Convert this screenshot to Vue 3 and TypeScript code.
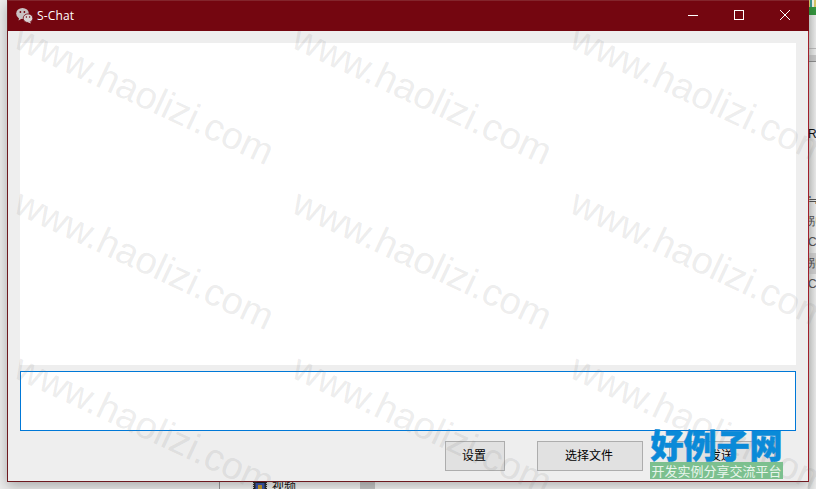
<script setup lang="ts">
const marks: number[] = Array.from({ length: 9 }, (_, i) => i)
const side: string[] = ['≒', '别', 'C', '别', 'C']
</script>

<template>
  <div class="desktop">
    <div class="behind-bottom">
      <svg class="film" width="14" height="10" viewBox="0 0 14 10">
        <rect width="14" height="10" fill="#222" />
        <path d="M.5 1V9M13.5 1V9" stroke="#ddd" stroke-dasharray="1 1" />
        <rect x="2.5" y="1" width="9" height="8" fill="#3a57b0" />
        <rect x="5" y="3" width="4" height="5" fill="#c79a2e" />
      </svg>
      <span class="film-label">视频</span>
      <div class="scrollbar"></div>
    </div>
    <div class="behind-right">
      <div class="pixels"></div>
      <div class="green"></div>
      <div class="rule-a"></div>
      <div class="rule-b"></div>
      <div class="r">R</div>
      <div v-for="(s, i) in side" :key="i" class="side-line" :class="{ hi: i === 3 }">{{ s }}</div>
    </div>

    <section class="window">
      <header class="titlebar">
        <svg class="logo" width="17" height="17" viewBox="0 0 17 17">
          <ellipse cx="6.5" cy="6.5" rx="6.3" ry="5.6" fill="#c9c2c3" />
          <path d="M3 10.5 2.6 13.4 6 11.5Z" fill="#c9c2c3" />
          <ellipse cx="12" cy="11.2" rx="4.8" ry="4.3" fill="#d9d4d5" stroke="#740610" stroke-width=".8" />
          <path d="M14 14.5 15 16.6 11.8 15.2Z" fill="#d9d4d5" />
          <circle cx="4.4" cy="5" r=".9" fill="#740610" />
          <circle cx="8.4" cy="5" r=".9" fill="#740610" />
          <circle cx="10.4" cy="10" r=".7" fill="#740610" />
          <circle cx="13.6" cy="10" r=".7" fill="#740610" />
        </svg>
        <span class="title">S-Chat</span>
        <div class="controls">
          <svg width="46" height="31" viewBox="0 0 46 31"><path d="M18 15.5H28" stroke="#fff" fill="none" /></svg>
          <svg width="46" height="31" viewBox="0 0 46 31"><rect x="18.5" y="10.5" width="9" height="9" stroke="#fff" fill="none" /></svg>
          <svg width="46" height="31" viewBox="0 0 46 31"><path d="M18 10 28 20M28 10 18 20" stroke="#fff" fill="none" /></svg>
        </div>
      </header>
      <div class="body">
        <div class="messages"></div>
        <div class="input"></div>
        <div class="actions">
          <button class="btn settings">设置</button>
          <button class="btn file">选择文件</button>
          <button class="btn send">发送</button>
        </div>
      </div>
    </section>

    <div class="watermark">
      <div class="marks">
        <span v-for="m in marks" :key="m" class="mark">www.haolizi.com</span>
      </div>
    </div>

    <div class="brand">
      <div class="brand-name">好例子网</div>
      <div class="brand-sub">开发实例分享交流平台</div>
    </div>
  </div>
</template>

<style>
html, body { margin: 0; background: #fff; }
</style>

<style scoped>
.desktop {
  position: relative;
  width: 816px;
  height: 489px;
  overflow: hidden;
  background: #ececec;
  font-family: "Noto Sans CJK SC", sans-serif;
}
.behind-bottom {
  position: absolute;
  left: 219px;
  right: 0;
  bottom: 0;
  height: 20px;
  background: #f4f4f4;
  border-left: 1px solid #999;
  padding-left: 33px;
  display: flex;
  align-items: flex-end;
  gap: 5px;
}
.film { margin-bottom: -3px; }
.film-label { font-size: 12px; line-height: 12px; margin-bottom: -3px; color: #111; }
.scrollbar {
  position: absolute;
  left: 140px;
  top: 0;
  width: 15px;
  height: 20px;
  background: #c6c6c6;
}
.behind-right {
  position: absolute;
  left: 808px;
  top: 0;
  width: 8px;
  height: 489px;
  background: linear-gradient(90deg, #d8dad8, #eeeeee);
  overflow: hidden;
  font: 12px/20px "Liberation Sans", sans-serif;
  color: #555;
}
.pixels {
  height: 7px;
  background: repeating-linear-gradient(90deg, #d8c868 0 2px, #3f9a90 2px 4px, #f2f2e8 4px 6px);
}
.green { height: 8px; background: #35973f; }
.rule-a { margin-top: 33px; height: 1px; background: #bdbdbd; }
.rule-b { margin-top: 6px; height: 6px; background: #c9c9c9; border-bottom: 1px solid #8f8f8f; }
.r { margin-top: 62px; color: #111; height: 66px; }
.side-line { height: 21px; }
.side-line.hi { background: #d0d0d0; }
.window {
  position: absolute;
  left: 7px;
  top: 0;
  width: 802px;
  height: 482px;
  box-sizing: border-box;
  border: 1px solid #6e1a20;
  border-right-color: #a01f2a;
  border-top: 0;
  background: #eeeeee;
  display: flex;
  flex-direction: column;
  box-shadow: 0 4px 12px rgba(0, 0, 0, .28);
}
.titlebar {
  height: 31px;
  flex: none;
  box-sizing: border-box;
  border-top: 1px solid #83252c;
  background: #740610;
  margin: 0 -1px 0 0;
  display: flex;
  align-items: center;
  color: #fff;
  padding-left: 8px;
}
.logo { margin-top: -2px; }
.title {
  margin: -2px 0 0 4px;
  font: 12px "Open Sans", sans-serif;
  letter-spacing: .15px;
}
.controls {
  margin-left: auto;
  margin-right: 1px;
  margin-top: -1px;
  display: flex;
}
.body {
  flex: 1;
  display: flex;
  flex-direction: column;
  padding: 12px 12px 10px 12px;
}
.messages {
  height: 322px;
  background: #fff;
}
.input {
  height: 60px;
  box-sizing: border-box;
  margin-top: 6px;
  background: #fff;
  border: 1px solid #0078d7;
}
.actions {
  margin-top: 10px;
  height: 30px;
  display: flex;
  padding-left: 425px;
}
.btn {
  height: 30px;
  box-sizing: border-box;
  border: 1px solid #adadad;
  background: #e1e1e1;
  font: 12px "Noto Sans CJK SC", sans-serif;
  color: #000;
  padding: 0 2px 3px 0;
}
.settings { width: 60px; }
.file { width: 106px; margin-left: 32px; }
.send { width: 106px; margin-left: 26px; }
.watermark {
  position: absolute;
  inset: 31px 0 0 0;
  overflow: hidden;
  pointer-events: none;
}
.marks {
  margin: -15px 0 0 26px;
  display: grid;
  grid-template-columns: repeat(3, 278px);
  grid-auto-rows: 165px;
}
.mark {
  font: 38px "Liberation Sans", sans-serif;
  color: rgba(120, 120, 120, .14);
  white-space: nowrap;
  transform: rotate(25deg);
  transform-origin: 0 0;
  height: 44px;
}
.brand {
  position: absolute;
  left: 650px;
  top: 427px;
  width: 133px;
}
.brand-name {
  font: 900 33px/35px "Noto Sans CJK SC", sans-serif;
  color: #0a8ad8;
  -webkit-text-stroke: .5px #0a8ad8;
  text-align: center;
  white-space: nowrap;
}
.brand-sub {
  height: 17px;
  background: #7cc08f;
  color: #e8f5ec;
  font: 13px/17px "Noto Sans CJK SC", sans-serif;
  text-align: center;
  white-space: nowrap;
}
</style>
